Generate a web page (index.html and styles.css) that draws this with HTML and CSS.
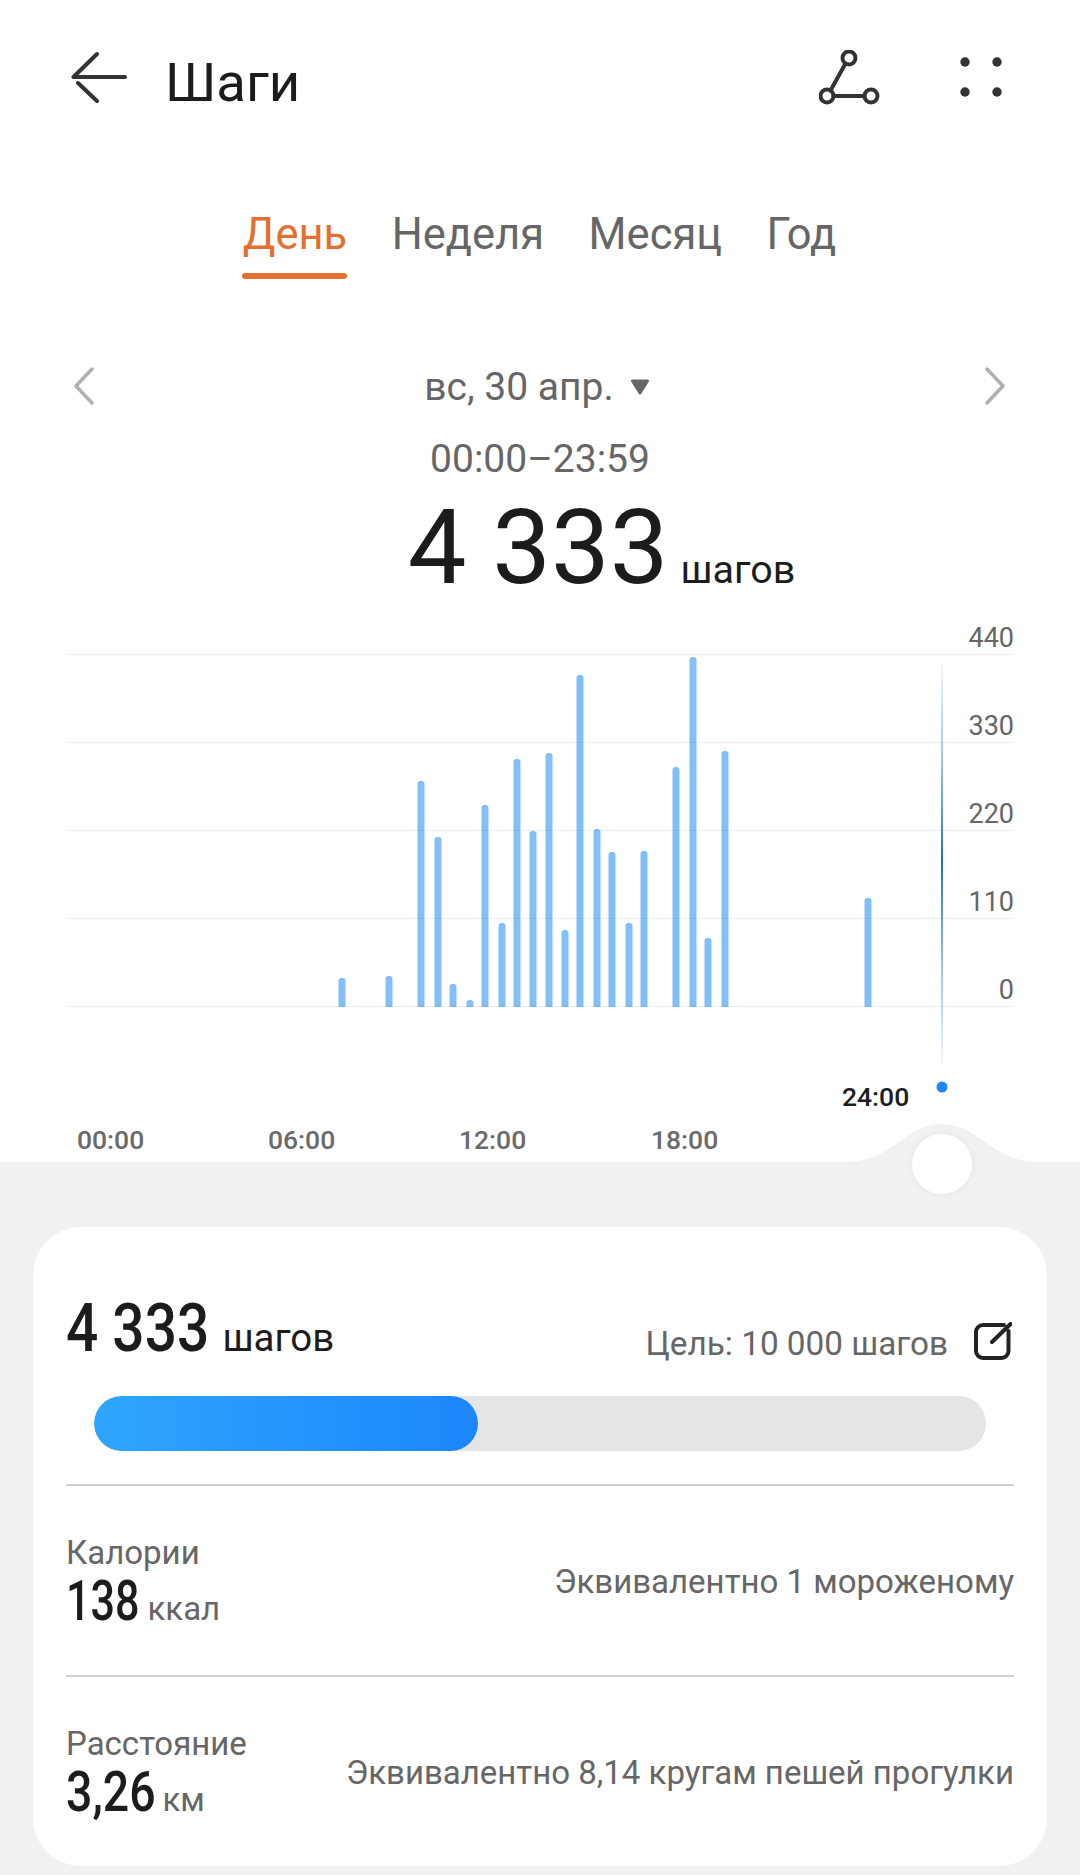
FILE: index.html
```html
<!DOCTYPE html>
<html lang="ru">
<head>
<meta charset="utf-8">
<title>Шаги</title>
<link rel="stylesheet" href="styles.css">
</head>
<body>
<div class="page">
  <section class="top">
    <header class="appbar">
      <svg class="icon-back" viewBox="0 0 56 54"><path d="M26 4 2.500 27H54M7 33l19 18"/></svg>
      <h1 class="title">Шаги</h1>
      <svg class="icon-route" viewBox="0 0 62 56"><circle cx="30" cy="8" r="6.500"/><circle cx="8" cy="46" r="6.500"/><circle cx="52" cy="46" r="6.500"/><path d="M26.500 13.500 11.500 40.500M14.500 46h31"/></svg>
      <svg class="icon-more" viewBox="0 0 42 40"><circle cx="5" cy="5" r="4.700"/><circle cx="37" cy="5" r="4.700"/><circle cx="5" cy="35" r="4.700"/><circle cx="37" cy="35" r="4.700"/></svg>
    </header>
    <nav class="tabs">
      <span class="tab tab-active">День</span>
      <span class="tab">Неделя</span>
      <span class="tab">Месяц</span>
      <span class="tab">Год</span>
    </nav>
    <div class="date-row">
      <svg class="chev" viewBox="0 0 22 38"><path d="M19 2 3 19l16 17"/></svg>
      <div class="date"><span>вс, 30 апр.</span><svg class="caret" viewBox="0 0 20 16"><path d="M2.500 2h15L10 14z"/></svg></div>
      <svg class="chev" viewBox="0 0 22 38"><path d="M3 2l16 17L3 36"/></svg>
    </div>
    <div class="range">00:00–23:59</div>
    <div class="total"><span class="total-num">4 333</span><span class="total-unit">шагов</span></div>
    <svg class="chart" viewBox="0 640 1080 522">
      <defs>
        <linearGradient id="cursor" x1="0" y1="0" x2="0" y2="1">
          <stop offset="0" stop-color="#1c86fb" stop-opacity=".05"/>
          <stop offset=".25" stop-color="#2a86d8" stop-opacity=".5"/>
          <stop offset=".49" stop-color="#1a6fc4"/>
          <stop offset=".75" stop-color="#2a86d8" stop-opacity=".5"/>
          <stop offset="1" stop-color="#1c86fb" stop-opacity=".05"/>
        </linearGradient>
        <filter id="soft" x="-30%" y="-30%" width="160%" height="160%"><feDropShadow dx="0" dy="0" stdDeviation="3" flood-color="#000" flood-opacity=".06"/></filter>
      </defs>
      <g class="grid">
        <path d="M67 654.500H1014M67 742.500H1014M67 830.500H1014M67 918.500H1014M67 1006.500H1014"/>
      </g>
      <svg class="bars" x="0" y="640" width="1080" height="367" viewBox="0 640 1080 367">
        <rect x="338.500" y="978" width="7" height="40" rx="3"/>
        <rect x="385.500" y="976" width="7" height="40" rx="3"/>
        <rect x="417.500" y="781" width="7" height="240" rx="3"/>
        <rect x="434.500" y="837" width="7" height="180" rx="3"/>
        <rect x="449.500" y="984" width="7" height="40" rx="3"/>
        <rect x="466.500" y="1000" width="7" height="20" rx="3"/>
        <rect x="481.500" y="805" width="7" height="210" rx="3"/>
        <rect x="498.500" y="923" width="7" height="100" rx="3"/>
        <rect x="513.500" y="759" width="7" height="260" rx="3"/>
        <rect x="529.500" y="831" width="7" height="190" rx="3"/>
        <rect x="545.500" y="753" width="7" height="270" rx="3"/>
        <rect x="561.500" y="930" width="7" height="90" rx="3"/>
        <rect x="576.500" y="675" width="7" height="340" rx="3"/>
        <rect x="593.500" y="829" width="7" height="190" rx="3"/>
        <rect x="608.500" y="852" width="7" height="170" rx="3"/>
        <rect x="625.500" y="923" width="7" height="100" rx="3"/>
        <rect x="640.500" y="851" width="7" height="170" rx="3"/>
        <rect x="672.500" y="767" width="7" height="250" rx="3"/>
        <rect x="689.500" y="657" width="7" height="360" rx="3"/>
        <rect x="704.500" y="938" width="7" height="80" rx="3"/>
        <rect x="721.500" y="751" width="7" height="270" rx="3"/>
        <rect x="864.500" y="898" width="7" height="120" rx="3"/>
      </svg>
      <rect class="cursor" x="941" y="663" width="2" height="402" fill="url(#cursor)"/>
      <circle class="dot" cx="942" cy="1087" r="5.500"/>
      <g class="y-labels">
        <text x="1014" y="647">440</text>
        <text x="1014" y="735">330</text>
        <text x="1014" y="823">220</text>
        <text x="1014" y="911">110</text>
        <text x="1014" y="999">0</text>
      </g>
      <g class="x-labels">
        <text x="77" y="1149">00:00</text>
        <text x="268" y="1149">06:00</text>
        <text x="459" y="1149">12:00</text>
        <text x="651" y="1149">18:00</text>
      </g>
      <text class="x-now" x="842" y="1106">24:00</text>
      <path class="bump" d="M846 1162C892 1162 905 1124 942 1124S992 1162 1038 1162z"/>
      <circle class="knob" cx="942" cy="1164" r="30" filter="url(#soft)"/>
    </svg>
  </section>
  <main class="card">
    <div class="goal-row">
      <div class="goal-value"><span class="num-lg">4 333</span><span class="unit-lg">шагов</span></div>
      <div class="goal-target"><span class="goal-text">Цель: 10 000 шагов</span>
        <svg class="icon-edit" viewBox="0 0 38 38"><path d="M30 3H9a7 7 0 0 0-7 7v19a7 7 0 0 0 7 7h18.500a7 7 0 0 0 7-7V9"/><path d="M18 20 36.500 2"/></svg>
      </div>
    </div>
    <div class="progress"><div class="progress-fill"></div></div>
    <div class="metric metric-first">
      <div class="metric-left">
        <div class="metric-label">Калории</div>
        <div class="metric-value"><span class="num-md">138</span><span class="unit-md">ккал</span></div>
      </div>
      <div class="metric-note">Эквивалентно 1 мороженому</div>
    </div>
    <div class="metric">
      <div class="metric-left">
        <div class="metric-label">Расстояние</div>
        <div class="metric-value"><span class="num-md num-md-wide">3,26</span><span class="unit-md">км</span></div>
      </div>
      <div class="metric-note">Эквивалентно 8,14 кругам пешей прогулки</div>
    </div>
  </main>
</div>
</body>
</html>
```

FILE: styles.css
```css
* { box-sizing: border-box; }
html, body { margin: 0; padding: 0; }
body { font-family: Roboto, "Noto Sans", sans-serif; color: #1c1c1c; background: #f1f1f1; }
.page { width: 1080px; height: 1875px; overflow: hidden; background: #f1f1f1; }

.top { position: relative; z-index: 1; height: 1162px; background: #fff; display: flex; flex-direction: column; align-items: center; }

.appbar { width: 100%; height: 105px; padding: 50px 78px 0 71px; display: flex; align-items: flex-start; flex: none; }
.icon-back { width: 56px; height: 54px; flex: none; fill: none; stroke: #333; stroke-width: 4; stroke-linecap: round; stroke-linejoin: round; }
.title { margin: 2px 0 0 38px; font-size: 54.500px; line-height: 60px; font-weight: 400; flex: 1; }
.icon-route { width: 62px; height: 56px; fill: none; stroke: #333; stroke-width: 4; stroke-linecap: round; flex: none; }
.icon-more { width: 42px; height: 40px; margin: 7px 0 0 79px; fill: #333; flex: none; }

.tabs { display: flex; gap: 44.500px; margin: 105px 0 0 -1px; height: 71px; flex: none; }
.tab { font-size: 43.500px; line-height: 50px; color: #666; position: relative; }
.tab-active { color: #e36f31; }
.tab-active::after { content: ""; position: absolute; left: -1px; right: 0; top: 63px; height: 6px; border-radius: 3px; background: #e36f31; }

.date-row { width: 100%; padding: 0 74px 0 73px; margin-top: 87px; display: flex; justify-content: space-between; align-items: center; height: 40px; flex: none; }
.chev { width: 22px; height: 38px; margin-top: -4px; fill: none; stroke: #b0b0b0; stroke-width: 3.500; stroke-linecap: round; stroke-linejoin: round; flex: none; }
.date { display: flex; align-items: center; gap: 16px; font-size: 39px; line-height: 38px; color: #666; margin-left: -5px; margin-bottom: 2px; }
.caret { width: 20px; height: 16px; fill: #666; stroke: #666; stroke-width: 3; stroke-linejoin: round; margin-bottom: 1px; }

.range { font-size: 39px; line-height: 46px; color: #666; margin-top: 28px; flex: none; }
.total { display: flex; align-items: baseline; gap: 12px; margin-top: 18px; margin-left: 123px; height: 96px; flex: none; }
.total-num { font-size: 104.500px; line-height: 96px; color: #1c1c1c; }
.total-unit { font-size: 39.500px; line-height: 40px; color: #1c1c1c; }

.chart { position: absolute; left: 0; top: 640px; width: 1080px; height: 522px; overflow: visible; }
.grid path { stroke: #ececec; stroke-width: 1; fill: none; }
.bars rect { fill: rgba(10, 125, 240, .5); }
.dot { fill: #1c86fb; }
.y-labels text { font-size: 27px; fill: #666; text-anchor: end; }
.x-labels text { font-size: 26.500px; font-weight: 500; fill: #6a6a6a; }
.x-now { font-size: 26.500px; font-weight: 500; fill: #1c1c1c; }
.bump { fill: #f1f1f1; }
.knob { fill: #fff; }

.card { width: 1014px; height: 639px; margin: 65px 0 0 33px; padding: 0 33px; background: #fff; border-radius: 48px; }
.goal-row { display: flex; justify-content: space-between; align-items: flex-start; height: 169px; padding-top: 67px; }
.goal-value { display: flex; align-items: baseline; }
.num-lg { display: inline-block; font-size: 66px; line-height: 70px; font-weight: 500; color: #1c1c1c; transform: scaleX(.86); transform-origin: left center; margin-right: -23px; }
.unit-lg { font-size: 38.500px; margin-left: 13px; color: #1c1c1c; }
.goal-target { display: flex; align-items: flex-start; gap: 26px; font-size: 33.300px; line-height: 36px; color: #666; padding-top: 28px; padding-right: 2px; }
.goal-text { margin-top: 4px; }
.icon-edit { width: 38px; height: 38px; fill: none; stroke: #222; stroke-width: 4; stroke-linecap: round; flex: none; }

.progress { height: 55px; margin: 0 28px; background: #e5e5e5; border-radius: 28px; overflow: hidden; }
.progress-fill { width: 43%; height: 100%; border-radius: 28px; background: linear-gradient(90deg, #2ea6fd, #1c86fb); }

.metric { height: 191px; border-top: 2px solid #d0d0d0; display: flex; justify-content: space-between; align-items: flex-start; }
.metric-first { margin-top: 33px; height: 191px; }
.metric-left { padding-top: 49px; }
.metric-label { font-size: 33px; line-height: 36px; color: #666; }
.metric-value { display: flex; align-items: baseline; }
.num-md { display: inline-block; font-size: 56px; line-height: 60px; font-weight: 500; color: #1c1c1c; transform: scaleX(.77); transform-origin: left center; margin-right: -22px; }
.num-md-wide { transform: scaleX(.83); margin-right: -19.500px; }
.unit-md { font-size: 33px; margin-left: 8px; color: #666; }
.metric-note { font-size: 33px; line-height: 36px; color: #666; padding-top: 78px; }
```
